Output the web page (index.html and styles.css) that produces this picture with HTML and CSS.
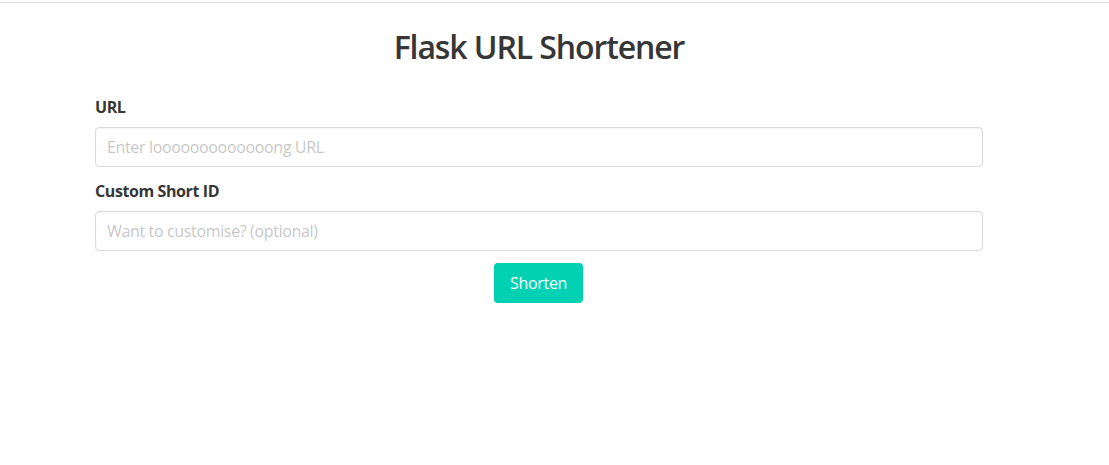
FILE: index.html
```html
<!DOCTYPE html>
<html lang="en">
<head>
<meta charset="utf-8">
<title>Flask URL Shortener</title>
<link rel="stylesheet" href="styles.css">
</head>
<body>
<div class="topline"></div>
<main class="container">
  <h1 class="title">Flask URL Shortener</h1>
  <form class="form">
    <div class="field">
      <label class="label" for="url">URL</label>
      <input class="input" id="url" type="text" placeholder="Enter looooooooooooong URL">
    </div>
    <div class="field">
      <label class="label" for="cid">Custom Short ID</label>
      <input class="input" id="cid" type="text" placeholder="Want to customise? (optional)">
    </div>
    <div class="actions">
      <button class="button" type="button">Shorten</button>
    </div>
  </form>
</main>
</body>
</html>
```
FILE: styles.css
```css
* { box-sizing: border-box; }
html, body { margin: 0; padding: 0; background: #fff; }
body {
  font-family: "Open Sans", "Noto Sans", "DejaVu Sans", sans-serif;
  color: #363636;
  font-size: 16px;
  line-height: 1.5;
}
.topline {
  margin-top: 2px;
  height: 1px;
  background: #dbdbdb;
}
.container {
  width: 888px;
  margin-left: 95px;
}
.title {
  margin: 0;
  padding-top: 26px;
  font-size: 32px;
  font-weight: 600;
  line-height: 36px;
  letter-spacing: -1.1px;
  text-align: center;
  color: #363636;
  height: 92px;
}
.field { margin-bottom: 12px; }
.label {
  display: block;
  font-weight: 700;
  font-size: 16px;
  line-height: 24px;
  letter-spacing: -0.4px;
  margin-bottom: 8px;
  color: #363636;
}
.input {
  display: block;
  width: 100%;
  height: 40px;
  border: 1px solid #dbdbdb;
  border-radius: 4px;
  padding: 0 11px;
  font-family: inherit;
  font-size: 16px;
  letter-spacing: -0.35px;
  color: #363636;
  background: #fff;
  box-shadow: inset 0 1px 2px rgba(10,10,10,.05);
  outline: none;
}
.input::placeholder { color: rgba(54,54,54,.3); }
.actions { display: flex; justify-content: center; }
.button {
  height: 40px;
  width: 89px;
  margin-right: 1px;
  border: none;
  border-radius: 4px;
  background: #00d1b2;
  color: #fff;
  font-family: inherit;
  font-size: 16px;
  letter-spacing: -0.3px;
  padding: 0;
  cursor: pointer;
}
```
